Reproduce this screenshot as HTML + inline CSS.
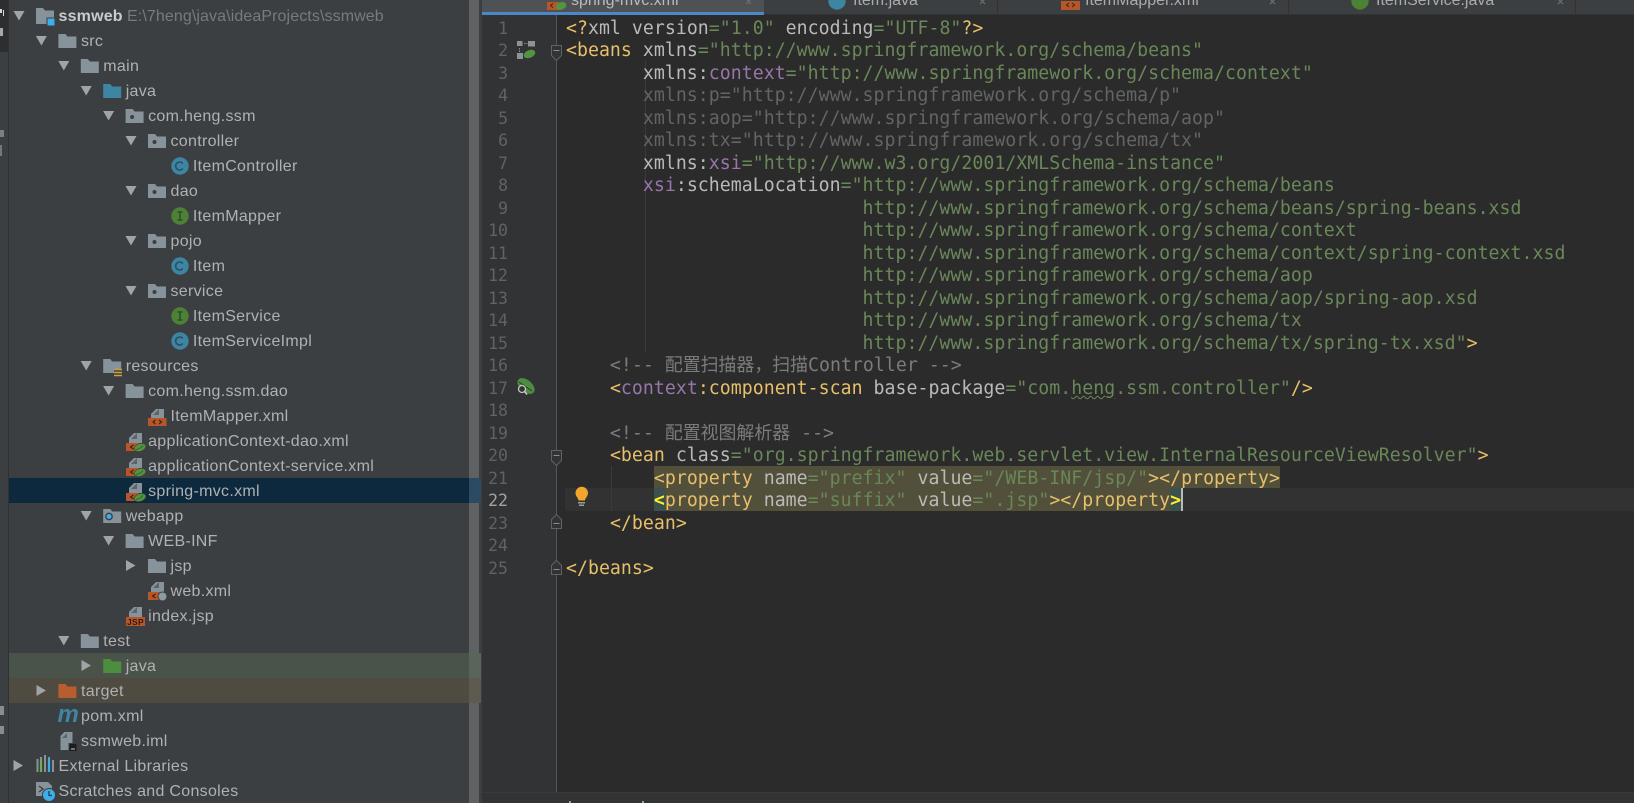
<!DOCTYPE html>
<html><head><meta charset="utf-8"><title>spring-mvc.xml</title>
<style>
html,body{margin:0;padding:0;background:#2b2b2b}
#p{position:relative;width:1634px;height:803px;overflow:hidden;background:#2b2b2b}
.b{position:absolute}
.x{position:absolute;white-space:pre;font:16px/25px "Liberation Sans",sans-serif;letter-spacing:.3px;color:#afb1b3;height:25px}
.l{position:absolute;white-space:pre;font:18.2px/22.5px "DejaVu Sans Mono","Liberation Mono",monospace;letter-spacing:.033px;color:#bababa;left:566px;height:22.5px;margin-top:1px}
.ln{position:absolute;left:470px;width:38px;text-align:right;font:16.5px/22.5px "DejaVu Sans Mono",monospace;color:#606366;height:22.5px;margin-top:1px}
.t{color:#e8bf6a}.n{color:#9876aa}.s{color:#6a8759}.g{color:#636464}.c{color:#7c7c7c}
.k{font:17.9px/22.5px "Liberation Mono","Noto Sans CJK SC",sans-serif;letter-spacing:0;color:#7c7c7c}
.tab{position:absolute;white-space:pre;font:16px/16px "Liberation Sans",sans-serif;top:-7px;color:#a9abad;height:16px}
.v{position:absolute;writing-mode:vertical-rl;transform:rotate(180deg);font:12px "Liberation Sans",sans-serif;color:#9fb4cc;white-space:pre}
svg{position:absolute;left:0;top:0}
</style></head><body><div id="p">
<!-- left strip -->
<div class="b" style="left:0;top:0;width:9px;height:803px;background:#3c3f41;overflow:hidden">
<div class="b" style="left:0;top:0;width:8px;height:52px;background:#2c2e30"></div>
<div class="v" style="left:-11px;top:62px">Z: Structure</div>
<div class="v" style="left:-11px;top:646px">2: Favorites</div>
<div class="v" style="left:-11px;top:760px">Web</div>
<div class="b" style="left:0;top:9px;width:2px;height:4px;background:#d8d8d8"></div>
<div class="b" style="left:3px;top:10px;width:1px;height:6px;background:#d8d8d8"></div>
<div class="b" style="left:0;top:28px;width:3px;height:8px;background:#a8a8a8"></div>
<div class="b" style="left:0;top:130px;width:4px;height:7px;background:#a8a8a8;opacity:.6"></div>
<div class="b" style="left:0;top:145px;width:2px;height:11px;background:#777"></div>
<div class="b" style="left:0;top:706px;width:4px;height:9px;background:#8a8d90"></div>
<div class="b" style="left:0;top:726px;width:4px;height:8px;background:#8a8d90"></div>
</div>
<div class="b" style="left:8px;top:0;width:1px;height:803px;background:#2f3133"></div>
<!-- tree panel -->
<div class="b" style="left:9px;top:0;width:473px;height:803px;background:#3c3f41"></div>
<div class="b" style="left:469px;top:0;width:10px;height:803px;background:#5f6162"></div>
<div class="b" style="left:9px;top:478px;width:460px;height:25px;background:#0d293e"></div>
<div class="b" style="left:469px;top:478px;width:12px;height:25px;background:#2b4b64"></div>
<div class="b" style="left:9px;top:653px;width:460px;height:25px;background:#4a5349"></div>
<div class="b" style="left:469px;top:653px;width:12px;height:25px;background:#5a645b"></div>
<div class="b" style="left:9px;top:678px;width:460px;height:25px;background:#4f4b41"></div>
<div class="b" style="left:469px;top:678px;width:12px;height:25px;background:#5f5a50"></div>
<!-- gutter + editor -->
<div class="b" style="left:482px;top:15px;width:75px;height:777px;background:#313335"></div>
<div class="b" style="left:556px;top:15px;width:1px;height:777px;background:#555657"></div>
<div class="b" style="left:565px;top:488px;width:1069px;height:23px;background:#323232"></div>
<div class="b" style="left:645px;top:60px;width:1px;height:292px;background:#3b3b3b"></div>
<div class="b" style="left:611px;top:466px;width:1px;height:45px;background:#3b3b3b"></div>
<div class="b" style="left:654px;top:466px;width:626px;height:22px;background:#52503a"></div>
<div class="b" style="left:654px;top:488px;width:527px;height:23px;background:#52503a"></div>
<div class="b" style="left:654px;top:488px;width:11px;height:23px;background:#3b514d"></div>
<div class="b" style="left:1170px;top:488px;width:11px;height:23px;background:#3b514d"></div>
<div class="b" style="left:1181px;top:488px;width:2px;height:23px;background:#bbbbbb"></div>
<!-- tab bar -->
<div class="b" style="left:482px;top:0;width:1152px;height:15px;background:#3c3f41;overflow:hidden">
<div class="b" style="left:0;top:0;width:282px;height:12px;background:#4e5254"></div>
<div class="b" style="left:515px;top:0;width:1px;height:15px;background:#323232"></div>
<div class="b" style="left:806px;top:0;width:1px;height:15px;background:#323232"></div>
<div class="b" style="left:1093px;top:0;width:1px;height:15px;background:#323232"></div>
<div class="tab" style="left:89px;color:#bbbbbb">spring-mvc.xml</div>
<div class="tab" style="left:371px">Item.java</div>
<div class="tab" style="left:603px">ItemMapper.xml</div>
<div class="tab" style="left:894px">ItemService.java</div>
<div class="b" style="left:0;top:14px;width:1152px;height:1px;background:#323232"></div>
<div class="b" style="left:0;top:12px;width:282px;height:3px;background:#4a88c7"></div>
</div>
<!-- bottom bar -->
<div class="b" style="left:482px;top:792px;width:1152px;height:11px;background:#313335;border-top:1px solid #3a3a3a;box-sizing:border-box"></div>
<div class="b" style="left:569px;top:801px;width:2px;height:2px;background:#a98"></div>
<div class="b" style="left:642px;top:801px;width:2px;height:2px;background:#8ab"></div>

<!-- tree text -->
<div class="x" style="left:58.5px;top:3.5px;font-weight:bold;letter-spacing:.18px;color:#c9cbcd">ssmweb</div>
<div class="x" style="left:127px;top:3.5px;letter-spacing:.1px;color:#787a7c">E:\7heng\java\ideaProjects\ssmweb</div>
<div class="x" style="left:81px;top:28.5px">src</div>
<div class="x" style="left:103.3px;top:53.5px">main</div>
<div class="x" style="left:125.7px;top:78.5px">java</div>
<div class="x" style="left:148.1px;top:103.5px">com.heng.ssm</div>
<div class="x" style="left:170.5px;top:128.5px">controller</div>
<div class="x" style="left:192.9px;top:153.5px">ItemController</div>
<div class="x" style="left:170.5px;top:178.5px">dao</div>
<div class="x" style="left:192.9px;top:203.5px">ItemMapper</div>
<div class="x" style="left:170.5px;top:228.5px">pojo</div>
<div class="x" style="left:192.9px;top:253.5px">Item</div>
<div class="x" style="left:170.5px;top:278.5px">service</div>
<div class="x" style="left:192.9px;top:303.5px">ItemService</div>
<div class="x" style="left:192.9px;top:328.5px">ItemServiceImpl</div>
<div class="x" style="left:125.7px;top:353.5px">resources</div>
<div class="x" style="left:148.1px;top:378.5px">com.heng.ssm.dao</div>
<div class="x" style="left:170.5px;top:403.5px">ItemMapper.xml</div>
<div class="x" style="left:148.1px;top:428.5px">applicationContext-dao.xml</div>
<div class="x" style="left:148.1px;top:453.5px">applicationContext-service.xml</div>
<div class="x" style="left:148.1px;top:478.5px">spring-mvc.xml</div>
<div class="x" style="left:125.7px;top:503.5px">webapp</div>
<div class="x" style="left:148.1px;top:528.5px">WEB-INF</div>
<div class="x" style="left:170.5px;top:553.5px">jsp</div>
<div class="x" style="left:170.5px;top:578.5px">web.xml</div>
<div class="x" style="left:148.1px;top:603.5px">index.jsp</div>
<div class="x" style="left:103.3px;top:628.5px">test</div>
<div class="x" style="left:125.7px;top:653.5px">java</div>
<div class="x" style="left:81px;top:678.5px">target</div>
<div class="x" style="left:81px;top:703.5px">pom.xml</div>
<div class="x" style="left:81px;top:728.5px">ssmweb.iml</div>
<div class="x" style="left:58.5px;top:753.5px">External Libraries</div>
<div class="x" style="left:58.5px;top:778.5px">Scratches and Consoles</div>

<!-- line numbers -->
<div class="ln" style="top:16.75px">1</div><div class="ln" style="top:39.25px">2</div><div class="ln" style="top:61.75px">3</div><div class="ln" style="top:84.25px">4</div><div class="ln" style="top:106.75px">5</div><div class="ln" style="top:129.25px">6</div><div class="ln" style="top:151.75px">7</div><div class="ln" style="top:174.25px">8</div><div class="ln" style="top:196.75px">9</div><div class="ln" style="top:219.25px">10</div><div class="ln" style="top:241.75px">11</div><div class="ln" style="top:264.25px">12</div><div class="ln" style="top:286.75px">13</div><div class="ln" style="top:309.25px">14</div><div class="ln" style="top:331.75px">15</div><div class="ln" style="top:354.25px">16</div><div class="ln" style="top:376.75px">17</div><div class="ln" style="top:399.25px">18</div><div class="ln" style="top:421.75px">19</div><div class="ln" style="top:444.25px">20</div><div class="ln" style="top:466.75px">21</div><div class="ln" style="top:489.25px;color:#a4a3a3">22</div><div class="ln" style="top:511.75px">23</div><div class="ln" style="top:534.25px">24</div><div class="ln" style="top:556.75px">25</div>

<!-- code -->
<div class="l" style="top:16.75px"><span class="t">&lt;?</span>xml version<span class="s">="1.0"</span> encoding<span class="s">="UTF-8"</span><span class="t">?&gt;</span></div>
<div class="l" style="top:39.25px"><span class="t">&lt;beans</span> xmlns<span class="s">="http://www.springframework.org/schema/beans"</span></div>
<div class="l" style="top:61.75px">       xmlns:<span class="n">context</span><span class="s">="http://www.springframework.org/schema/context"</span></div>
<div class="l" style="top:84.25px;color:#636464">       xmlns:p="http://www.springframework.org/schema/p"</div>
<div class="l" style="top:106.75px;color:#636464">       xmlns:aop="http://www.springframework.org/schema/aop"</div>
<div class="l" style="top:129.25px;color:#636464">       xmlns:tx="http://www.springframework.org/schema/tx"</div>
<div class="l" style="top:151.75px">       xmlns:<span class="n">xsi</span><span class="s">="http://www.w3.org/2001/XMLSchema-instance"</span></div>
<div class="l" style="top:174.25px">       <span class="n">xsi</span>:schemaLocation<span class="s">="http://www.springframework.org/schema/beans</span></div>
<div class="l" style="top:196.75px;color:#6a8759">                           http://www.springframework.org/schema/beans/spring-beans.xsd</div>
<div class="l" style="top:219.25px;color:#6a8759">                           http://www.springframework.org/schema/context</div>
<div class="l" style="top:241.75px;color:#6a8759">                           http://www.springframework.org/schema/context/spring-context.xsd</div>
<div class="l" style="top:264.25px;color:#6a8759">                           http://www.springframework.org/schema/aop</div>
<div class="l" style="top:286.75px;color:#6a8759">                           http://www.springframework.org/schema/aop/spring-aop.xsd</div>
<div class="l" style="top:309.25px;color:#6a8759">                           http://www.springframework.org/schema/tx</div>
<div class="l" style="top:331.75px"><span class="s">                           http://www.springframework.org/schema/tx/spring-tx.xsd"</span><span class="t">&gt;</span></div>
<div class="l" style="top:354.25px;color:#7c7c7c">    &lt;!-- <span class="k">配置扫描器，扫描</span>Controller --&gt;</div>
<div class="l" style="top:376.75px">    <span class="t">&lt;</span><span class="n">context</span><span class="t">:component-scan</span> base-package<span class="s">="com.<span style="text-decoration:underline wavy #6a8759;text-decoration-thickness:1px">heng</span>.ssm.controller"</span><span class="t">/&gt;</span></div>
<div class="l" style="top:421.75px;color:#7c7c7c">    &lt;!-- <span class="k">配置视图解析器</span> --&gt;</div>
<div class="l" style="top:444.25px">    <span class="t">&lt;bean</span> class<span class="s">="org.springframework.web.servlet.view.InternalResourceViewResolver"</span><span class="t">&gt;</span></div>
<div class="l" style="top:466.75px">        <span class="t">&lt;property</span> name<span class="s">="prefix"</span> value<span class="s">="/WEB-INF/jsp/"</span><span class="t">&gt;&lt;/property&gt;</span></div>
<div class="l" style="top:489.25px">        <span style="color:#ffef28;font-weight:bold">&lt;</span><span class="t">property</span> name<span class="s">="suffix"</span> value<span class="s">=".jsp"</span><span class="t">&gt;&lt;/property</span><span style="color:#ffef28;font-weight:bold">&gt;</span></div>
<div class="l" style="top:511.75px">    <span class="t">&lt;/bean&gt;</span></div>
<div class="l" style="top:556.75px"><span class="t">&lt;/beans&gt;</span></div>

<!-- icons -->
<svg width="1634" height="803" viewBox="0 0 1634 803">
<defs>
<polygon id="ad" points="0,0 11,0 5.5,9.5" fill="#a1a4a6"/>
<polygon id="ar" points="0,0 9.5,5.5 0,11" fill="#a1a4a6"/>
<path id="fo" d="M0 0h7l2 2.5h9V14H0z" fill="#87939a"/>
<g id="pk"><path d="M0 0h7l2 2.5h9V14H0z" fill="#87939a"/><circle cx="6.5" cy="8" r="2" fill="#3c3f41"/></g>
<g id="cl"><circle cx="9" cy="9" r="8.7" fill="#3d85a3"/><path d="M11.8 6.5A4 4 0 1 0 11.8 11.500" fill="none" stroke="#2b4f60" stroke-width="1.6"/></g>
<g id="in"><circle cx="9" cy="9" r="8.7" fill="#4c8137"/><path d="M6.500 5h5M6.500 13h5M9 5v8" fill="none" stroke="#2d4f20" stroke-width="1.5"/></g>
<g id="dc"><path d="M3 11V6l5-5h8v10z" fill="#87939a"/><path d="M11 1v6H5z" fill="#3c3f41" opacity=".55"/></g>
<g id="xm"><use href="#dc"/><rect x="0" y="10" width="18.5" height="8" fill="#b8562a"/><path d="M7.500 12l-2.500 2 2.500 2M11 12l2.500 2-2.500 2" fill="none" stroke="#3a2414" stroke-width="1.2"/></g>
<g id="sp"><use href="#dc"/><rect x="0" y="11" width="13" height="8" fill="#b8562a"/><path d="M7.500 13l-3 2 3 2" fill="none" stroke="#3a2414" stroke-width="1.2"/><ellipse cx="14" cy="15.500" rx="6" ry="3.800" fill="#54933f" stroke="#3c3f41" stroke-width=".6" transform="rotate(-18 14 15.500)"/><path d="M10 17.500q4-.5 7-4" fill="none" stroke="#2f5a24" stroke-width=".8"/></g>
</defs>
<!-- arrows -->
<use href="#ad" x="13.5" y="11"/><use href="#ad" x="35.9" y="36"/><use href="#ad" x="58.3" y="61"/><use href="#ad" x="80.7" y="86"/><use href="#ad" x="103.1" y="111"/><use href="#ad" x="125.5" y="136"/><use href="#ad" x="125.5" y="186"/><use href="#ad" x="125.5" y="236"/><use href="#ad" x="125.5" y="286"/><use href="#ad" x="80.7" y="361"/><use href="#ad" x="103.1" y="386"/><use href="#ad" x="80.7" y="511"/><use href="#ad" x="103.1" y="536"/><use href="#ar" x="126" y="560"/><use href="#ad" x="58.3" y="636"/><use href="#ar" x="81.5" y="660"/><use href="#ar" x="36.5" y="685"/><use href="#ar" x="13.5" y="760"/>
<!-- project -->
<path d="M36 8h7l2 2.500h9V24H36z" fill="#87939a"/><rect x="47" y="18" width="8" height="8" fill="#3daee9" stroke="#3c3f41" stroke-width="1"/>
<use href="#fo" x="58.4" y="34"/><use href="#fo" x="80.8" y="59"/>
<path d="M103.200 84h7l2 2.500h9V98h-18z" fill="#3d85a3"/>
<use href="#pk" x="125.6" y="109"/><use href="#pk" x="148" y="134"/><use href="#pk" x="148" y="184"/><use href="#pk" x="148" y="234"/><use href="#pk" x="148" y="284"/>
<use href="#cl" x="171" y="157"/><use href="#in" x="171" y="207"/><use href="#cl" x="171" y="257"/><use href="#in" x="171" y="307"/><use href="#cl" x="171" y="332"/>
<!-- resources -->
<path d="M103.200 359h7l2 2.500h9V373h-18z" fill="#87939a"/><rect x="114" y="369" width="8" height="8" fill="#3c3f41"/><path d="M114 369.500h8M114 372.500h8M114 375.500h8" stroke="#c9a43f" stroke-width="1.6"/>
<use href="#fo" x="125.6" y="384"/>
<use href="#xm" x="148" y="408"/><use href="#sp" x="126" y="432"/><use href="#sp" x="126" y="457"/><use href="#sp" x="126" y="482"/>
<!-- webapp -->
<path d="M103.200 509h7l2 2.500h9V523h-18z" fill="#87939a"/><circle cx="109" cy="516.500" r="3.200" fill="#3daee9" stroke="#3c3f41" stroke-width="1.4"/>
<use href="#fo" x="125.6" y="534"/><use href="#fo" x="148" y="559"/>
<!-- web.xml -->
<use href="#dc" x="148" y="581"/><rect x="148" y="592" width="13" height="8" fill="#b8562a"/><path d="M155.500 594l-3 2 3 2" fill="none" stroke="#3a2414" stroke-width="1.2"/><circle cx="162.500" cy="596.500" r="4.500" fill="#8e9ba3" stroke="#3c3f41"/>
<!-- index.jsp -->
<use href="#dc" x="126" y="606"/><rect x="126" y="617" width="19" height="9" fill="#b8562a"/><text x="135.500" y="625" font-family="Liberation Sans,sans-serif" font-size="8.500" font-weight="bold" fill="#2e1c10" text-anchor="middle" letter-spacing=".3">JSP</text>
<use href="#fo" x="80.800" y="634"/>
<path d="M103.200 659h7l2 2.500h9V673h-18z" fill="#4c8e3e"/>
<path d="M58.400 684h7l2 2.500h9V698h-18z" fill="#b85e2e"/>
<text x="57.500" y="722" font-family="Liberation Sans,sans-serif" font-size="24" font-weight="bold" font-style="italic" fill="#3d85a3">m</text>
<!-- iml -->
<path d="M60.500 736l4-4h8v18h-12z" fill="#87939a"/><path d="M67 733v5h-5z" fill="#3c3f41" opacity=".55"/><rect x="69" y="743.500" width="8" height="8" fill="#1c1c1c" stroke="#3c3f41"/><rect x="71" y="748.500" width="4" height="1" fill="#ccc"/>
<!-- ext libs -->
<path d="M37.500 759v13M41 757v15M45 755v17" stroke="#87939a" stroke-width="2"/><path d="M41 760v12" stroke="#6ab04c" stroke-width="2.200"/><path d="M49 757v15M53 760v12" stroke="#87939a" stroke-width="2"/><path d="M49 759v13" stroke="#3daee9" stroke-width="2.200"/>
<!-- scratches -->
<path d="M36 782h12l4 4v10H36z" fill="#87939a"/><path d="M39 786l4 3-4 3" fill="none" stroke="#3c3f41" stroke-width="1.400"/><circle cx="49" cy="795" r="6.500" fill="#3daee9" stroke="#3c3f41"/><path d="M49 791v4.500h3" fill="none" stroke="#1e3c4c" stroke-width="1.300"/>
<!-- tab icons -->
<g><rect x="547" y="2" width="12" height="8" fill="#b8562a"/><path d="M553 3.500l-2.500 2 2.500 2" fill="none" stroke="#3a2414"/><ellipse cx="561" cy="6" rx="5.500" ry="3.800" fill="#54933f" transform="rotate(-18 561 6)"/></g>
<circle cx="837" cy="1" r="8.700" fill="#3d85a3"/>
<rect x="1061" y="1" width="19" height="9" fill="#b8562a"/><path d="M1069 3l-2.500 2 2.500 2M1072 3l2.500 2-2.500 2" fill="none" stroke="#3a2414"/>
<circle cx="1360" cy="1" r="8.700" fill="#4c8137"/>
<path d="M746 -1l5 5M751 -1l-5 5M980 -1l5 5M985 -1l-5 5M1270 -1l5 5M1275 -1l-5 5M1558 -1l5 5M1563 -1l-5 5" stroke="#6e7072" stroke-width="1.200"/>
<!-- gutter icons -->
<rect x="517" y="41" width="5.500" height="5" fill="#8b9399"/><rect x="528" y="41" width="7" height="5.500" fill="#8b9399"/><rect x="517" y="53" width="6" height="6" fill="#8b9399"/><path d="M524 43.500h1.500M526.500 43.500h1M519.500 48v1.500M519.500 50.500v1.500" stroke="#8b9399"/><ellipse cx="529.500" cy="54" rx="6" ry="3.800" fill="#54933f" transform="rotate(-22 529.500 54)"/>
<ellipse cx="526" cy="386" rx="10" ry="6" fill="#4c8e3e" transform="rotate(40 526 386)"/><path d="M519 382l13 9" stroke="#313335" stroke-width="1"/><circle cx="522" cy="389" r="3.500" fill="#313335" stroke="#c5c8ca" stroke-width="1.300"/><path d="M524.500 391.500l2.500 3" stroke="#c5c8ca" stroke-width="1.500"/>
<path d="M578.500 500.500c0-2.500-3-4-3-7.500a6.200 6.200 0 0 1 12.500 0c0 3.500-3 5-3 7.500z" fill="#f2a62b"/><rect x="578" y="502" width="7" height="1.500" fill="#9c9e9f"/><rect x="579" y="504.500" width="5" height="1.500" fill="#9c9e9f"/>
<!-- fold markers -->
<g fill="#313335" stroke="#606366" stroke-width="1">
<path d="M551.500 45.500h10v10l-5 5-5-5z"/><path d="M551.500 450.500h10v10l-5 5-5-5z"/>
<path d="M551.500 528.500h10v-9l-5-5-5 5z"/><path d="M551.500 574.500h10v-9l-5-5-5 5z"/>
</g>
<path d="M553.500 50.500h6M553.500 455.500h6M553.500 523.500h6M553.500 569.500h6" stroke="#8a8c8e"/>
</svg>
</div></body></html>
